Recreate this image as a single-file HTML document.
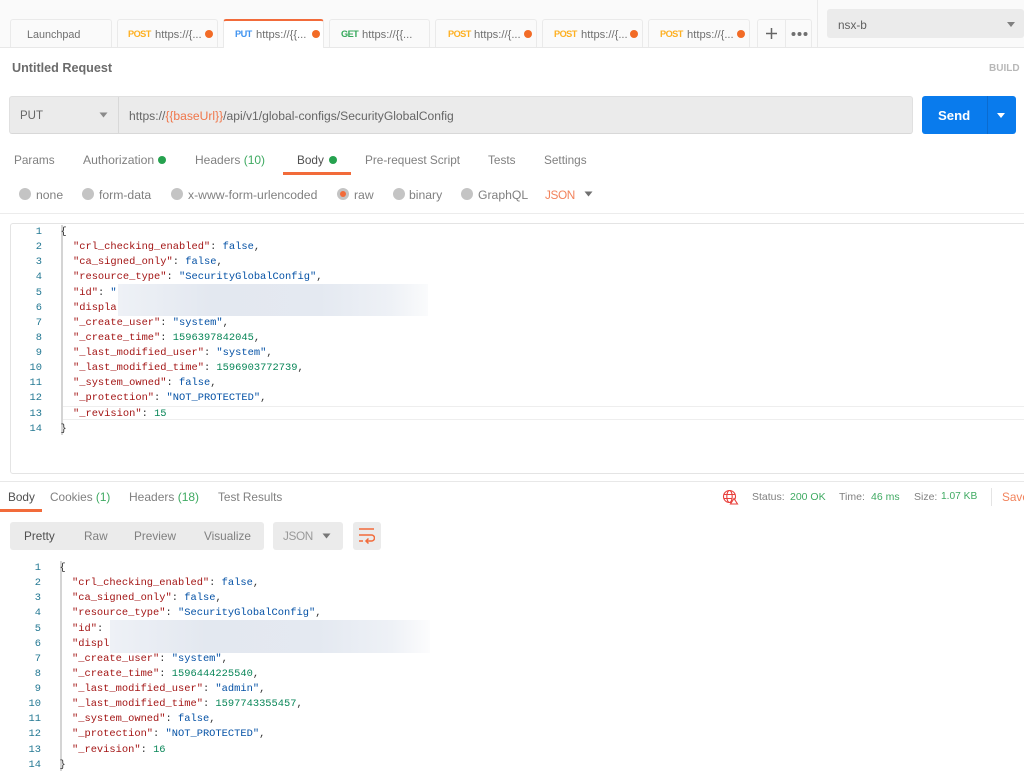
<!DOCTYPE html>
<html><head><meta charset="utf-8"><style>
html,body{margin:0;padding:0;background:#fff}
#p{position:relative;width:1024px;height:778px;overflow:hidden;background:#fff;font-family:"Liberation Sans",sans-serif;font-size:11.8px;color:#808080;filter:blur(.35px)}
#p div,#p span.a{position:absolute}
.t{white-space:nowrap;line-height:16px}
.tab{top:19px;height:28px;box-sizing:border-box;border:1px solid #eaeaea;border-bottom:0;border-radius:3px 3px 0 0;background:#fafafa}
.m{font-weight:bold;font-size:9.2px;letter-spacing:-.55px;top:26px}
.u{top:27px;font-size:11.2px;color:#707070}
.dot{width:8px;height:8px;border-radius:50%;background:#f26b26}
.r{width:12px;height:12px;border-radius:50%;background:#c4c4c4;top:188px}
.w{font-size:12.2px}
.code{font-family:"Liberation Mono",monospace;font-size:10.4px;line-height:15.13px;white-space:pre;color:#333}
.n{font-family:"Liberation Mono",monospace;font-size:10.4px;line-height:15.13px;white-space:pre;color:#237893;text-align:right;width:32px;left:10px}
i{font-style:normal}.k{color:#a31515}.b{color:#0451a5}.g{color:#098658}
.g2{color:#3faa62}
</style></head><body><div id="p">
<div style="left:0;top:0;width:1024px;height:47px;background:#fafafa"></div>
<div style="left:0;top:47px;width:1024px;height:1px;background:#e8e8e8"></div>

<div class="tab" style="left:10px;width:102px"></div>
<div class="tab" style="left:117px;width:101px"></div>
<div class="tab" style="left:223px;width:101px;height:29px;background:#fff;border-top:2px solid #f26b3a;z-index:2"></div>
<div class="tab" style="left:329px;width:101px"></div>
<div class="tab" style="left:435px;width:102px"></div>
<div class="tab" style="left:542px;width:101px"></div>
<div class="tab" style="left:648px;width:102px"></div>
<div class="tab" style="left:757px;width:55px"></div>
<div style="left:785px;top:20px;width:1px;height:27px;background:#eaeaea"></div>
<div style="left:817px;top:0;width:1px;height:47px;background:#eaeaea"></div>
<div style="left:827px;top:9px;width:197px;height:29px;background:#ebebeb;border-radius:3px"></div>

<div class="t" style="left:27px;top:27px;font-size:10.8px;color:#707070">Launchpad</div>
<div class="t m" style="left:128px;color:#fdb022">POST</div><div class="t u" style="left:155px">https://{...</div><div class="dot" style="left:205px;top:30px"></div>
<div class="t m" style="left:235px;color:#3f93f0;z-index:3">PUT</div><div class="t u" style="left:256px;z-index:3">https://{{...</div><div class="dot" style="left:312px;top:30px;z-index:3"></div>
<div class="t m" style="left:341px;color:#35a85a">GET</div><div class="t u" style="left:362px">https://{{...</div>
<div class="t m" style="left:448px;color:#fdb022">POST</div><div class="t u" style="left:474px">https://{...</div><div class="dot" style="left:524px;top:30px"></div>
<div class="t m" style="left:554px;color:#fdb022">POST</div><div class="t u" style="left:581px">https://{...</div><div class="dot" style="left:630px;top:30px"></div>
<div class="t m" style="left:660px;color:#fdb022">POST</div><div class="t u" style="left:687px">https://{...</div><div class="dot" style="left:737px;top:30px"></div>
<svg style="position:absolute;left:765px;top:27px" width="13" height="13"><path d="M6.500 1v11M1 6.500h11" stroke="#666" stroke-width="1.500"/></svg>
<svg style="position:absolute;left:791px;top:31px" width="17" height="6" fill="#707070"><circle cx="2.500" cy="3" r="2"/><circle cx="8.500" cy="3" r="2"/><circle cx="14.500" cy="3" r="2"/></svg>
<div class="t" style="left:838px;top:17px;color:#606060">nsx-b</div>
<svg style="position:absolute;left:1006px;top:21px" width="10" height="7"><path d="M1 1h8L5 6z" fill="#808080"/></svg>

<div class="t" style="left:12px;top:60px;font-size:12.6px;font-weight:bold;color:#6b6b6b">Untitled Request</div>
<div class="t" style="left:989px;top:61px;font-size:10px;font-weight:bold;color:#b8b8b8">BUILD</div>

<div style="left:9px;top:96px;width:904px;height:38px;box-sizing:border-box;background:#ebebeb;border:1px solid #e0e0e0;border-bottom:1px solid #d8d8d8;border-radius:3px"></div>
<div style="left:118px;top:97px;width:1px;height:36px;background:#d8d8d8"></div>
<div class="t" style="left:20px;top:108px;font-size:11.5px;color:#666">PUT</div>
<svg style="position:absolute;left:99px;top:112px" width="9" height="6"><path d="M.5.500h8L4.500 5.500z" fill="#8a8a8a"/></svg>
<div class="t" style="left:129px;top:108px;font-size:12.1px;color:#666">https://<i style="color:#f0764a">{{baseUrl}}</i>/api/v1/global-configs/SecurityGlobalConfig</div>

<div style="left:922px;top:96px;width:94px;height:38px;background:#097bed;border-radius:3px"></div>
<div style="left:987px;top:96px;width:1px;height:38px;background:#0a6bd0"></div>
<div class="t" style="left:938px;top:108px;font-size:13.2px;font-weight:bold;color:#fff">Send</div>
<svg style="position:absolute;left:996px;top:113px" width="10" height="6"><path d="M1 0h8L5 5z" fill="#fff"/></svg>

<div class="t" style="left:14px;top:152px">Params</div>
<div class="t" style="left:83px;top:152px;font-size:12.2px">Authorization</div><div class="dot" style="left:158px;top:156px;background:#26a24f"></div>
<div class="t" style="left:195px;top:152px;font-size:12px">Headers <i class="g2">(10)</i></div>
<div class="t" style="left:297px;top:152px;color:#505050">Body</div><div class="dot" style="left:329px;top:156px;background:#26a24f"></div>
<div style="left:283px;top:172px;width:68px;height:3px;background:#f26b3a"></div>
<div class="t" style="left:365px;top:152px">Pre-request Script</div>
<div class="t" style="left:488px;top:152px">Tests</div>
<div class="t" style="left:544px;top:152px">Settings</div>

<div class="r" style="left:19px"></div><div class="t w" style="left:36px;top:187px">none</div>
<div class="r" style="left:82px"></div><div class="t w" style="left:99px;top:187px">form-data</div>
<div class="r" style="left:171px"></div><div class="t w" style="left:188px;top:187px">x-www-form-urlencoded</div>
<div class="r" style="left:337px"></div><div style="left:340px;top:191px;width:6px;height:6px;border-radius:50%;background:#f26b3a"></div><div class="t w" style="left:354px;top:187px">raw</div>
<div class="r" style="left:393px"></div><div class="t w" style="left:409px;top:187px">binary</div>
<div class="r" style="left:461px"></div><div class="t w" style="left:478px;top:187px">GraphQL</div>
<div class="t" style="left:545px;top:187px;font-size:11.8px;letter-spacing:-.4px;color:#f2835c">JSON</div>
<svg style="position:absolute;left:584px;top:191px" width="9" height="6"><path d="M.5.500h8L4.500 5.500z" fill="#707070"/></svg>
<div style="left:0;top:213px;width:1024px;height:1px;background:#ececec"></div>

<div style="left:10px;top:223px;width:1020px;height:251px;box-sizing:border-box;border:1px solid #e4e4e4;border-radius:3px"></div>
<div style="left:0;top:481px;width:1024px;height:1px;background:#e8e8e8"></div>
<div style="left:62px;top:406px;width:962px;height:14px;box-sizing:border-box;border:1px solid #eeeeee;border-right:0"></div>
<div style="left:61px;top:225px;width:2px;height:210px;background:#d4d4d4"></div>

<div class="n" style="top:225px">1
2
3
4
5
6
7
8
9
10
11
12
13
14</div>
<div class="code" style="left:60.500px;top:225px">{
  <i class="k">"crl_checking_enabled"</i>: <i class="b">false</i>,
  <i class="k">"ca_signed_only"</i>: <i class="b">false</i>,
  <i class="k">"resource_type"</i>: <i class="b">"SecurityGlobalConfig"</i>,
  <i class="k">"id"</i>: <i class="b">"</i>
  <i class="k">"displa</i>
  <i class="k">"_create_user"</i>: <i class="b">"system"</i>,
  <i class="k">"_create_time"</i>: <i class="g">1596397842045</i>,
  <i class="k">"_last_modified_user"</i>: <i class="b">"system"</i>,
  <i class="k">"_last_modified_time"</i>: <i class="g">1596903772739</i>,
  <i class="k">"_system_owned"</i>: <i class="b">false</i>,
  <i class="k">"_protection"</i>: <i class="b">"NOT_PROTECTED"</i>,
  <i class="k">"_revision"</i>: <i class="g">15</i>
}</div>
<div style="left:118px;top:284px;width:310px;height:32px;background:linear-gradient(90deg,#eef1f6 0,#e3e8f0 30%,#e4e9f1 65%,#eef1f6 88%,#fafbfc 100%)"></div>

<div class="t" style="left:8px;top:489px;color:#505050">Body</div>
<div style="left:0;top:509px;width:42px;height:3px;background:#f26b3a"></div>
<div class="t" style="left:50px;top:489px">Cookies <i class="g2">(1)</i></div>
<div class="t" style="left:129px;top:489px;font-size:12px">Headers <i class="g2">(18)</i></div>
<div class="t" style="left:218px;top:489px">Test Results</div>

<svg style="position:absolute;left:722px;top:489px" width="17" height="16" fill="none" stroke="#e8403c" stroke-width="1.100"><circle cx="7.500" cy="7.500" r="6"/><ellipse cx="7.500" cy="7.500" rx="2.700" ry="6"/><path d="M1.500 5.500h12M1.500 9.500h8"/><path d="M12 9.500l3.500 5.500h-7z" fill="#fff"/></svg>
<div class="t" style="left:752px;top:489px;font-size:10.500px">Status:</div><div class="t g2" style="left:790px;top:489px;font-size:10.500px">200 OK</div>
<div class="t" style="left:839px;top:489px;font-size:10.500px">Time:</div><div class="t g2" style="left:871px;top:489px;font-size:10.500px">46 ms</div>
<div class="t" style="left:914px;top:489px;font-size:10.500px">Size:</div><div class="t g2" style="left:941px;top:489px;font-size:10.200px">1.07 KB</div>
<div style="left:991px;top:488px;width:1px;height:18px;background:#e4e4e4"></div>
<div class="t" style="left:1002px;top:489px;color:#f2835c">Save</div>

<div style="left:10px;top:522px;width:254px;height:28px;background:#ebebeb;border-radius:3px"></div>
<div class="t" style="left:24px;top:528px;color:#505050">Pretty</div>
<div class="t" style="left:84px;top:528px">Raw</div>
<div class="t" style="left:134px;top:528px">Preview</div>
<div class="t" style="left:204px;top:528px">Visualize</div>
<div style="left:273px;top:522px;width:70px;height:28px;background:#ebebeb;border-radius:3px"></div>
<div class="t" style="left:283px;top:528px;font-size:11.800px;letter-spacing:-.4px;color:#999">JSON</div>
<svg style="position:absolute;left:322px;top:533px" width="9" height="6"><path d="M.5.500h8L4.500 5.500z" fill="#777"/></svg>
<div style="left:353px;top:522px;width:28px;height:28px;background:#ebebeb;border-radius:3px"></div>
<svg style="position:absolute;left:359px;top:527px" width="16" height="18" fill="none" stroke="#f26b3a" stroke-width="1.500"><path d="M0 2h15M0 8h12.500a2.500 2.500 0 0 1 0 6H7M9.500 11.500L7 14l2.500 2.500M0 14h4"/></svg>

<div class="n" style="left:9px;top:561px">1
2
3
4
5
6
7
8
9
10
11
12
13
14</div>
<div style="left:60px;top:561px;width:2px;height:210px;background:#d4d4d4"></div>
<div class="code" style="left:59.500px;top:561px">{
  <i class="k">"crl_checking_enabled"</i>: <i class="b">false</i>,
  <i class="k">"ca_signed_only"</i>: <i class="b">false</i>,
  <i class="k">"resource_type"</i>: <i class="b">"SecurityGlobalConfig"</i>,
  <i class="k">"id"</i>:
  <i class="k">"displ</i>
  <i class="k">"_create_user"</i>: <i class="b">"system"</i>,
  <i class="k">"_create_time"</i>: <i class="g">1596444225540</i>,
  <i class="k">"_last_modified_user"</i>: <i class="b">"admin"</i>,
  <i class="k">"_last_modified_time"</i>: <i class="g">1597743355457</i>,
  <i class="k">"_system_owned"</i>: <i class="b">false</i>,
  <i class="k">"_protection"</i>: <i class="b">"NOT_PROTECTED"</i>,
  <i class="k">"_revision"</i>: <i class="g">16</i>
}</div>
<div style="left:110px;top:620px;width:320px;height:33px;background:linear-gradient(90deg,#eef1f6 0,#e3e8f0 30%,#e4e9f1 65%,#eef1f6 88%,#fcfcfd 100%)"></div>
</div></body></html>
